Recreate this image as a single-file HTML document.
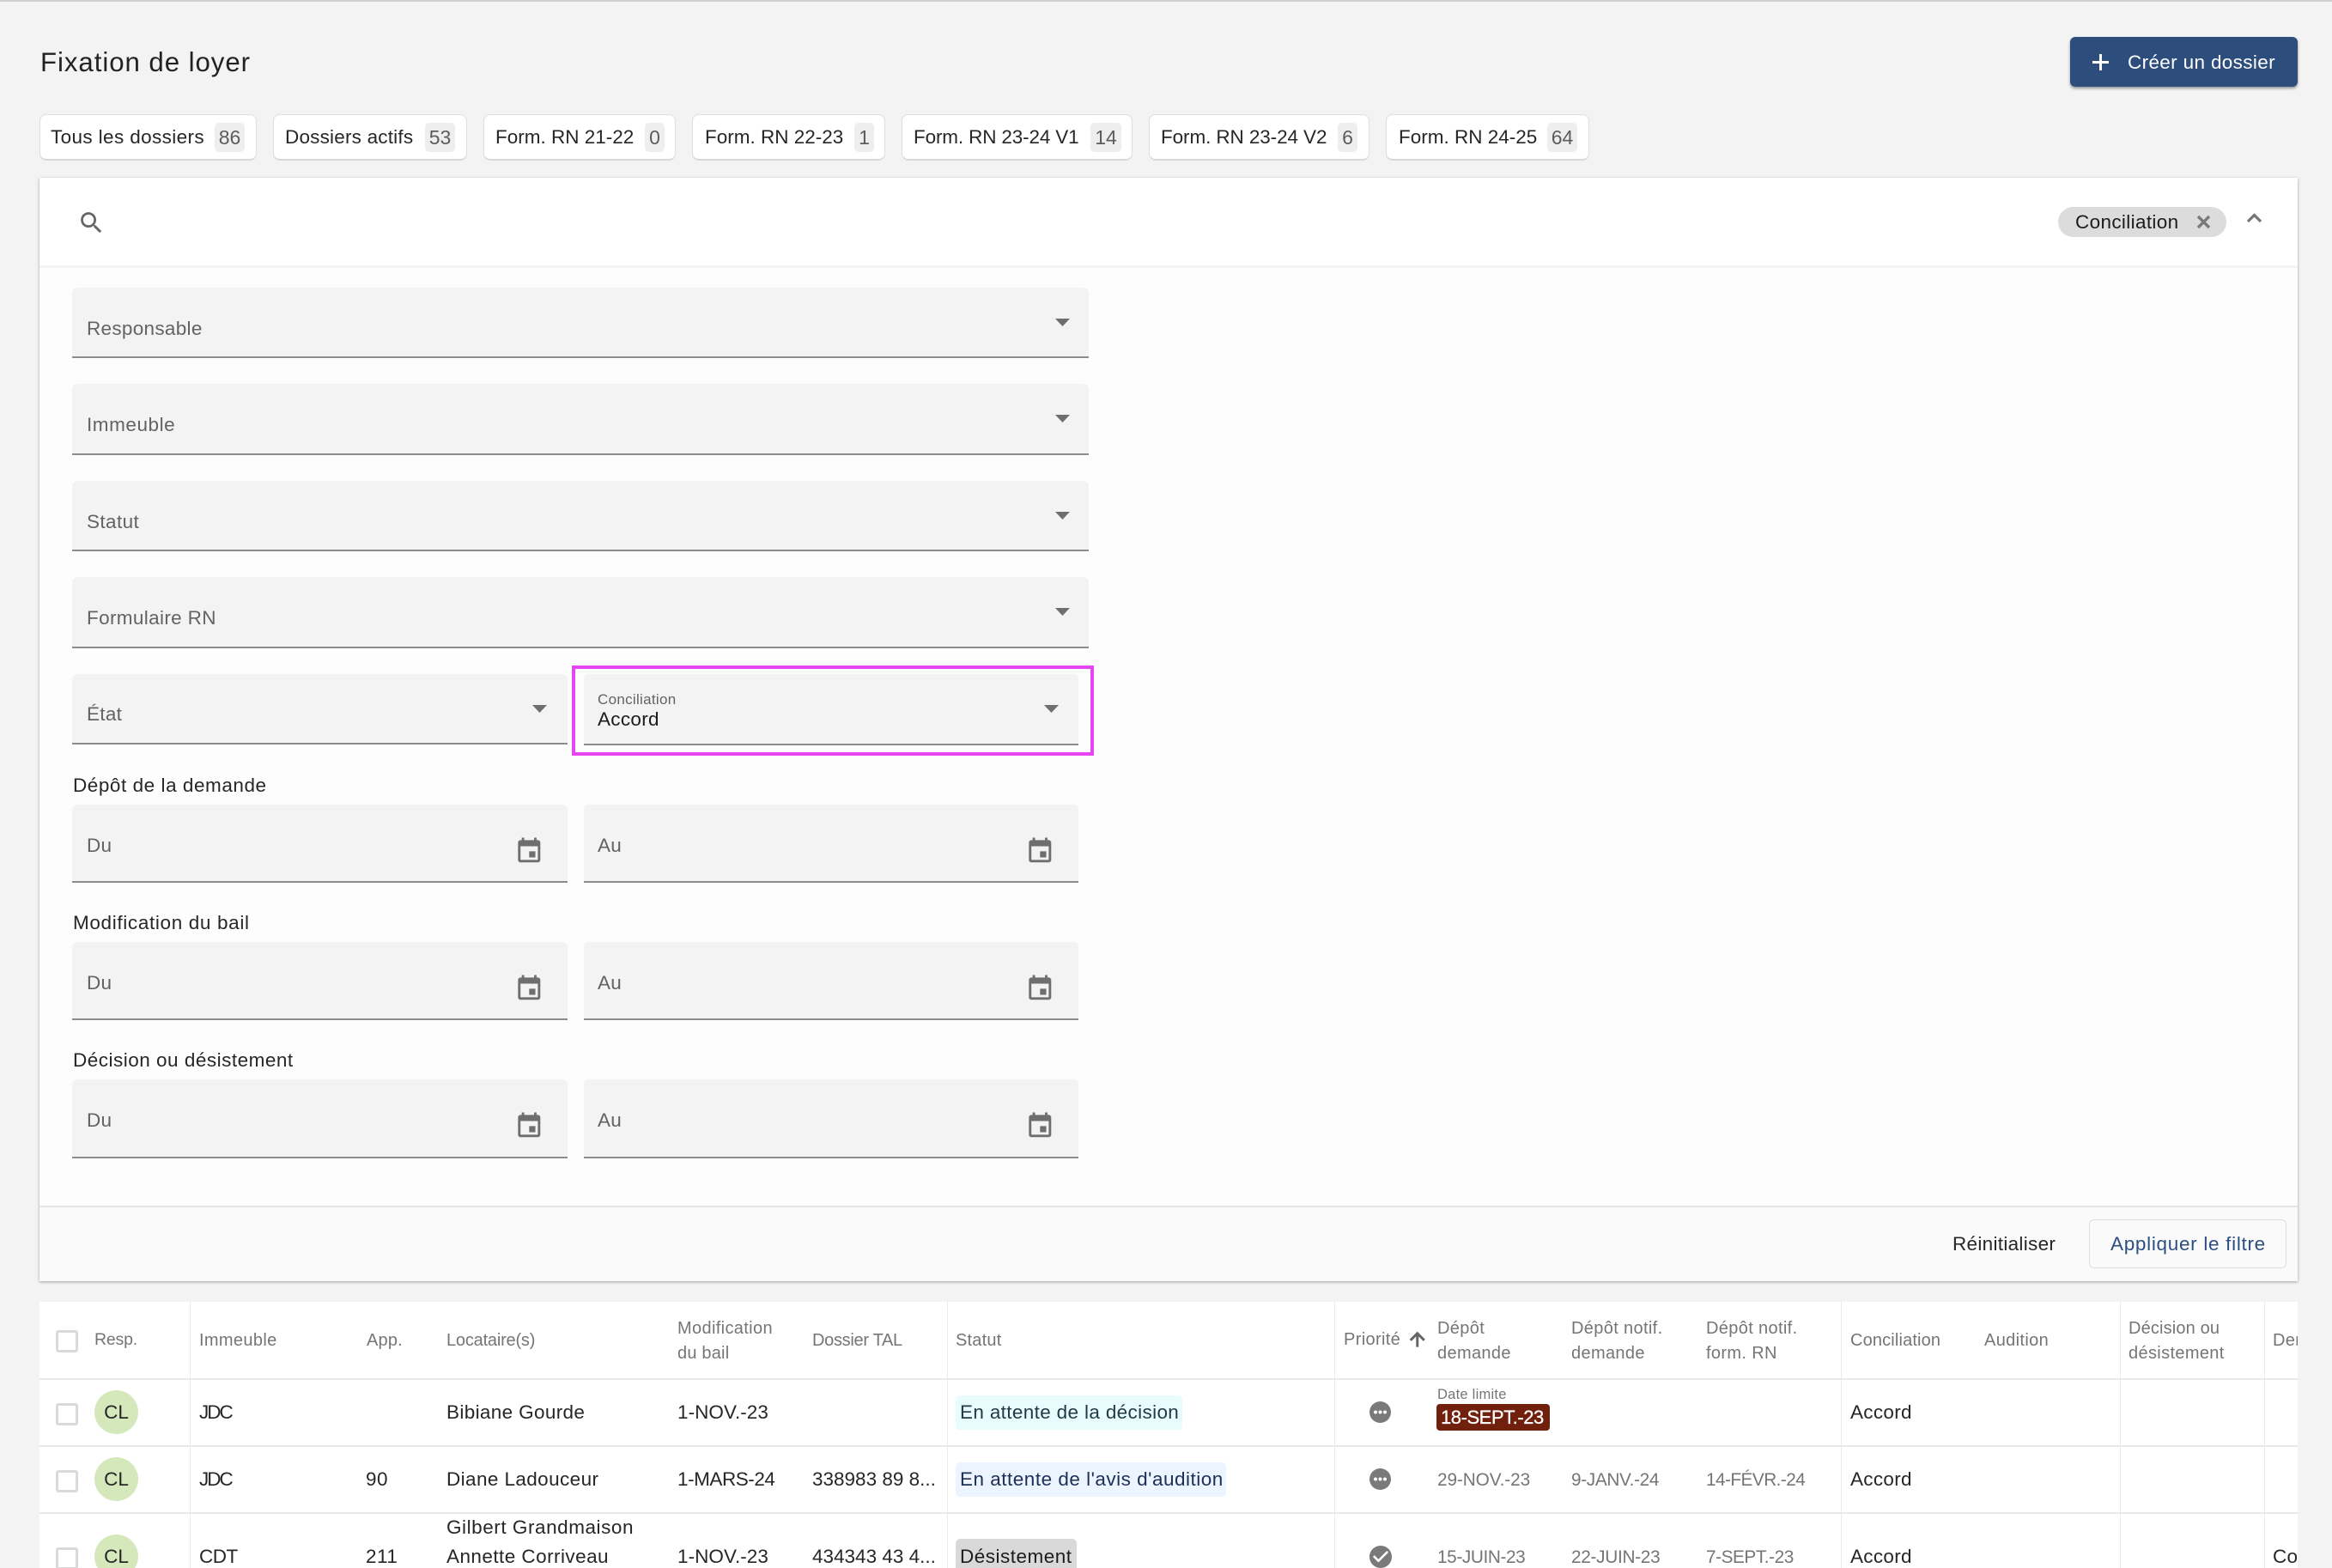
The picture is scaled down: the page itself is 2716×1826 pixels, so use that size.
<!DOCTYPE html>
<html lang="fr">
<head>
<meta charset="utf-8">
<title>Fixation de loyer</title>
<style>
html,body{margin:0;padding:0;width:2716px;height:1826px;overflow:hidden;background:#f3f3f3;}
body{font-family:"Liberation Sans",sans-serif;color:#262626;position:relative;}
.t,.b,svg.i{position:absolute;}
.t{white-space:nowrap;line-height:1;}
.s{font-size:22.5px;letter-spacing:.3px;}
.h{font-size:20px;letter-spacing:.35px;color:#757575;}
.g{color:#636363;}
.d{color:#757575;font-size:20.8px;}
.tab{position:absolute;top:133px;height:54px;box-sizing:border-box;background:#fff;border:1px solid #dedede;border-bottom:2px solid #d9d9d9;border-radius:8px;}
.bd{position:absolute;top:143px;height:34px;background:#eee;border-radius:5px;color:#5c5c5c;font-size:23px;line-height:35px;text-align:center;}
.f{position:absolute;background:#f3f3f3;border-radius:6px 6px 0 0;border-bottom:2px solid #8c8c8c;box-sizing:content-box;}
.ck{position:absolute;left:65px;width:26px;height:26px;box-sizing:border-box;border:3px solid #dadada;border-radius:3px;background:#fff;}
.av{position:absolute;left:110px;width:51px;height:51px;border-radius:50%;background:#d5e8bc;text-align:center;line-height:52px;font-size:22.5px;color:#262626;}
.vl{position:absolute;top:1516px;bottom:0;width:1px;background:#ebebeb;}
.hl{position:absolute;left:46px;right:0;height:2px;background:#e8e8e8;}
.chip{position:absolute;height:40px;border-radius:5px;}
svg.i{fill:#6e6e6e;display:block;}
</style>
</head>
<body>
<div class="b" style="left:0;top:0;width:2716px;height:2px;background:#cfcfcf;"></div>

<div class="t" style="left:47px;top:57px;font-size:31.2px;letter-spacing:.95px;color:#222;">Fixation de loyer</div>

<div class="b" style="left:2411px;top:43px;width:265px;height:58px;background:#2d4d7c;border-radius:6px;box-shadow:0 2px 3px rgba(0,0,0,.4);"></div>
<div class="b" style="left:2437px;top:71px;width:19px;height:3px;background:#fff;"></div>
<div class="b" style="left:2445px;top:63px;width:3px;height:19px;background:#fff;"></div>
<div class="t s" style="left:2478px;top:62px;color:#fff;letter-spacing:.35px;">Créer un dossier</div>

<div class="tab" style="left:46px;width:253px;"></div><div class="t s" style="left:59px;top:149px;letter-spacing:.38px;">Tous les dossiers</div><div class="bd" style="left:250px;width:35px;">86</div>
<div class="tab" style="left:318px;width:226px;"></div><div class="t s" style="left:332px;top:149px;letter-spacing:.2px;">Dossiers actifs</div><div class="bd" style="left:495px;width:35px;">53</div>
<div class="tab" style="left:563px;width:224px;"></div><div class="t s" style="left:577px;top:149px;letter-spacing:0;">Form. RN 21-22</div><div class="bd" style="left:751px;width:23px;">0</div>
<div class="tab" style="left:806px;width:225px;"></div><div class="t s" style="left:821px;top:149px;letter-spacing:0;">Form. RN 22-23</div><div class="bd" style="left:995px;width:23px;">1</div>
<div class="tab" style="left:1050px;width:269px;"></div><div class="t s" style="left:1064px;top:149px;letter-spacing:-.15px;">Form. RN 23-24 V1</div><div class="bd" style="left:1270px;width:36px;">14</div>
<div class="tab" style="left:1338px;width:257px;"></div><div class="t s" style="left:1352px;top:149px;letter-spacing:-.1px;">Form. RN 23-24 V2</div><div class="bd" style="left:1558px;width:23px;">6</div>
<div class="tab" style="left:1614px;width:237px;"></div><div class="t s" style="left:1629px;top:149px;letter-spacing:0;">Form. RN 24-25</div><div class="bd" style="left:1802px;width:35px;">64</div>

<!-- Filter card -->
<div class="b" style="left:46px;top:207px;width:2630px;height:1285px;background:#fdfdfd;box-shadow:0 1px 3px rgba(0,0,0,.35);"></div>
<div class="b" style="left:46px;top:207px;width:2630px;height:102px;background:#fff;"></div>
<div class="b" style="left:46px;top:309px;width:2630px;height:3px;background:#f3f3f3;"></div>

<svg class="i" style="left:90px;top:243px;fill:#666;" width="33" height="33" viewBox="0 0 24 24"><path d="M15.5 14h-.79l-.28-.27C15.41 12.59 16 11.11 16 9.5 16 5.91 13.09 3 9.5 3S3 5.91 3 9.5 5.91 16 9.5 16c1.61 0 3.09-.59 4.23-1.57l.27.28v.79l5 4.99L20.49 19l-4.99-5zm-6 0C7.01 14 5 11.99 5 9.5S7.01 5 9.5 5 14 7.01 14 9.5 11.99 14 9.5 14z"/></svg>

<div class="b" style="left:2397px;top:241px;width:196px;height:35px;border-radius:18px;background:#dcdcdc;"></div>
<div class="t s" style="left:2417px;top:248px;color:#1c1c1c;letter-spacing:.35px;">Conciliation</div>
<svg class="i" style="left:2557px;top:249px;fill:none;" width="19" height="19" viewBox="0 0 19 19"><path d="M3 3L16 16M16 3L3 16" stroke="#7a7a7a" stroke-width="3.4"/></svg>
<svg class="i" style="left:2615px;top:246px;fill:none;" width="21" height="15" viewBox="0 0 21 15"><path d="M3 12L10.5 4.5L18 12" stroke="#757575" stroke-width="3.2"/></svg>

<!-- Selects -->
<div class="f" style="left:84px;top:335px;width:1184px;height:80px;"></div>
<div class="t s g" style="left:101px;top:372px;">Responsable</div>
<svg class="i" style="left:1229px;top:371px;" width="17" height="9" viewBox="0 0 17 9"><path d="M0 0H17L8.5 9Z"/></svg>

<div class="f" style="left:84px;top:447px;width:1184px;height:81px;"></div>
<div class="t s g" style="left:101px;top:484px;letter-spacing:.55px;">Immeuble</div>
<svg class="i" style="left:1229px;top:483px;" width="17" height="9" viewBox="0 0 17 9"><path d="M0 0H17L8.5 9Z"/></svg>

<div class="f" style="left:84px;top:560px;width:1184px;height:80px;"></div>
<div class="t s g" style="left:101px;top:597px;letter-spacing:.4px;">Statut</div>
<svg class="i" style="left:1229px;top:596px;" width="17" height="9" viewBox="0 0 17 9"><path d="M0 0H17L8.5 9Z"/></svg>

<div class="f" style="left:84px;top:672px;width:1184px;height:81px;"></div>
<div class="t s g" style="left:101px;top:709px;letter-spacing:.35px;">Formulaire RN</div>
<svg class="i" style="left:1229px;top:708px;" width="17" height="9" viewBox="0 0 17 9"><path d="M0 0H17L8.5 9Z"/></svg>

<div class="f" style="left:84px;top:785px;width:577px;height:80px;"></div>
<div class="t s g" style="left:101px;top:821px;">État</div>
<svg class="i" style="left:620px;top:821px;" width="17" height="9" viewBox="0 0 17 9"><path d="M0 0H17L8.5 9Z"/></svg>

<div class="b" style="left:666px;top:775px;width:608px;height:105px;box-sizing:border-box;border:4px solid #e845f2;"></div>
<div class="f" style="left:680px;top:785px;width:576px;height:81px;"></div>
<div class="t g" style="left:696px;top:806px;font-size:17px;letter-spacing:.3px;">Conciliation</div>
<div class="t s" style="left:696px;top:827px;color:#1c1c1c;">Accord</div>
<svg class="i" style="left:1216px;top:821px;" width="17" height="9" viewBox="0 0 17 9"><path d="M0 0H17L8.5 9Z"/></svg>

<!-- Date groups -->
<div class="t s" style="left:85px;top:904px;letter-spacing:.55px;">Dépôt de la demande</div>
<div class="f" style="left:84px;top:937px;width:577px;height:89px;"></div><div class="t s g" style="left:101px;top:974px;">Du</div>
<svg class="i" style="left:598.7px;top:973.5px;" width="34.64" height="34.64" viewBox="0 0 24 24"><path d="M17 12h-5v5h5v-5zM16 1v2H8V1H6v2H5c-1.11 0-1.99.9-1.99 2L3 19c0 1.1.89 2 2 2h14c1.1 0 2-.9 2-2V5c0-1.100-.9-2-2-2h-1V1h-2zm3 18H5V8h14v11z"/></svg>
<div class="f" style="left:680px;top:937px;width:576px;height:89px;"></div><div class="t s g" style="left:696px;top:974px;">Au</div>
<svg class="i" style="left:1193.5px;top:973.5px;" width="34.64" height="34.64" viewBox="0 0 24 24"><path d="M17 12h-5v5h5v-5zM16 1v2H8V1H6v2H5c-1.11 0-1.99.9-1.99 2L3 19c0 1.1.89 2 2 2h14c1.1 0 2-.9 2-2V5c0-1.100-.9-2-2-2h-1V1h-2zm3 18H5V8h14v11z"/></svg>

<div class="t s" style="left:85px;top:1064px;letter-spacing:.65px;">Modification du bail</div>
<div class="f" style="left:84px;top:1097px;width:577px;height:89px;"></div><div class="t s g" style="left:101px;top:1134px;">Du</div>
<svg class="i" style="left:598.7px;top:1133.5px;" width="34.64" height="34.64" viewBox="0 0 24 24"><path d="M17 12h-5v5h5v-5zM16 1v2H8V1H6v2H5c-1.11 0-1.99.9-1.99 2L3 19c0 1.1.89 2 2 2h14c1.1 0 2-.9 2-2V5c0-1.100-.9-2-2-2h-1V1h-2zm3 18H5V8h14v11z"/></svg>
<div class="f" style="left:680px;top:1097px;width:576px;height:89px;"></div><div class="t s g" style="left:696px;top:1134px;">Au</div>
<svg class="i" style="left:1193.5px;top:1133.5px;" width="34.64" height="34.64" viewBox="0 0 24 24"><path d="M17 12h-5v5h5v-5zM16 1v2H8V1H6v2H5c-1.11 0-1.99.9-1.99 2L3 19c0 1.1.89 2 2 2h14c1.1 0 2-.9 2-2V5c0-1.100-.9-2-2-2h-1V1h-2zm3 18H5V8h14v11z"/></svg>

<div class="t s" style="left:85px;top:1224px;letter-spacing:.5px;">Décision ou désistement</div>
<div class="f" style="left:84px;top:1257px;width:577px;height:90px;"></div><div class="t s g" style="left:101px;top:1294px;">Du</div>
<svg class="i" style="left:598.7px;top:1293.5px;" width="34.64" height="34.64" viewBox="0 0 24 24"><path d="M17 12h-5v5h5v-5zM16 1v2H8V1H6v2H5c-1.11 0-1.99.9-1.99 2L3 19c0 1.1.89 2 2 2h14c1.1 0 2-.9 2-2V5c0-1.100-.9-2-2-2h-1V1h-2zm3 18H5V8h14v11z"/></svg>
<div class="f" style="left:680px;top:1257px;width:576px;height:90px;"></div><div class="t s g" style="left:696px;top:1294px;">Au</div>
<svg class="i" style="left:1193.5px;top:1293.5px;" width="34.64" height="34.64" viewBox="0 0 24 24"><path d="M17 12h-5v5h5v-5zM16 1v2H8V1H6v2H5c-1.11 0-1.99.9-1.99 2L3 19c0 1.1.89 2 2 2h14c1.1 0 2-.9 2-2V5c0-1.100-.9-2-2-2h-1V1h-2zm3 18H5V8h14v11z"/></svg>

<!-- Footer -->
<div class="b" style="left:46px;top:1404px;width:2630px;height:88px;background:#fafafa;border-top:2px solid #e6e6e6;box-sizing:border-box;"></div>
<div class="t s" style="left:2274px;top:1438px;">Réinitialiser</div>
<div class="b" style="left:2433px;top:1420px;width:230px;height:57px;box-sizing:border-box;border:1px solid #dedede;border-radius:6px;"></div>
<div class="t s" style="left:2458px;top:1438px;color:#2c4f82;letter-spacing:.7px;">Appliquer le filtre</div>

<!-- Table -->
<div class="b" style="left:0;top:0;width:2676px;height:1826px;overflow:hidden;">
<div class="b" style="left:46px;top:1516px;width:2630px;height:310px;background:#fff;"></div>
<div class="vl" style="left:221px;"></div>
<div class="vl" style="left:1103px;"></div>
<div class="vl" style="left:1554px;"></div>
<div class="vl" style="left:2144px;"></div>
<div class="vl" style="left:2469px;"></div>
<div class="vl" style="left:2637px;"></div>
<div class="hl" style="top:1605px;"></div>
<div class="hl" style="top:1683px;"></div>
<div class="hl" style="top:1761px;"></div>

<div class="ck" style="top:1549px;"></div>
<div class="t h" style="left:110px;top:1551px;letter-spacing:-.2px;font-size:19.5px;">Resp.</div>
<div class="t h" style="left:232px;top:1551px;">Immeuble</div>
<div class="t h" style="left:427px;top:1551px;letter-spacing:.2px;">App.</div>
<div class="t h" style="left:520px;top:1551px;letter-spacing:-.2px;">Locataire(s)</div>
<div class="t h" style="left:789px;top:1537px;">Modification</div>
<div class="t h" style="left:789px;top:1566px;letter-spacing:.2px;">du bail</div>
<div class="t h" style="left:946px;top:1551px;letter-spacing:-.3px;">Dossier TAL</div>
<div class="t h" style="left:1113px;top:1551px;letter-spacing:.2px;">Statut</div>
<div class="t h" style="left:1565px;top:1550px;">Priorité</div>
<svg class="i" style="left:1638px;top:1547px;fill:#666;stroke:#666;stroke-width:.8;" width="25.5" height="25.5" viewBox="0 0 24 24"><path d="M4 12l1.41 1.41L11 7.83V20h2V7.83l5.58 5.59L20 12l-8-8-8 8z"/></svg>
<div class="t h" style="left:1674px;top:1537px;">Dépôt</div>
<div class="t h" style="left:1674px;top:1566px;">demande</div>
<div class="t h" style="left:1830px;top:1537px;">Dépôt notif.</div>
<div class="t h" style="left:1830px;top:1566px;">demande</div>
<div class="t h" style="left:1987px;top:1537px;">Dépôt notif.</div>
<div class="t h" style="left:1987px;top:1566px;">form. RN</div>
<div class="t h" style="left:2155px;top:1551px;letter-spacing:.15px;">Conciliation</div>
<div class="t h" style="left:2311px;top:1551px;">Audition</div>
<div class="t h" style="left:2479px;top:1537px;letter-spacing:.15px;">Décision ou</div>
<div class="t h" style="left:2479px;top:1566px;">désistement</div>
<div class="t h" style="left:2647px;top:1551px;">Dernier</div>

<!-- Row 1 -->
<div class="ck" style="top:1634px;"></div>
<div class="av" style="top:1619px;">CL</div>
<div class="t s" style="left:232px;top:1634px;letter-spacing:-2px;">JDC</div>
<div class="t s" style="left:520px;top:1634px;letter-spacing:.35px;">Bibiane Gourde</div>
<div class="t s" style="left:789px;top:1634px;letter-spacing:.05px;">1-NOV.-23</div>
<div class="chip" style="left:1113px;top:1625px;width:264px;background:#e8fcfe;"></div>
<div class="t s" style="left:1118px;top:1634px;color:#1f3a44;letter-spacing:.35px;">En attente de la décision</div>
<svg class="i" style="left:1595px;top:1632px;" width="25" height="25" viewBox="0 0 25 25"><circle cx="12.5" cy="12.5" r="12.5" fill="#7a7a7a"/><circle cx="7" cy="12.5" r="2" fill="#fff"/><circle cx="12.5" cy="12.5" r="2" fill="#fff"/><circle cx="18" cy="12.5" r="2" fill="#fff"/></svg>
<div class="t" style="left:1674px;top:1616px;font-size:16.5px;letter-spacing:.25px;color:#757575;">Date limite</div>
<div class="b" style="left:1673px;top:1635px;width:132px;height:31px;background:#72200e;border-radius:4px;"></div>
<div class="t" style="left:1678px;top:1640px;color:#fff;font-size:22px;letter-spacing:-.45px;-webkit-text-stroke:.3px #fff;">18-SEPT.-23</div>
<div class="t s" style="left:2155px;top:1634px;">Accord</div>

<!-- Row 2 -->
<div class="ck" style="top:1712px;"></div>
<div class="av" style="top:1697px;">CL</div>
<div class="t s" style="left:232px;top:1712px;letter-spacing:-2px;">JDC</div>
<div class="t s" style="left:426px;top:1712px;letter-spacing:.5px;">90</div>
<div class="t s" style="left:520px;top:1712px;letter-spacing:.4px;">Diane Ladouceur</div>
<div class="t s" style="left:789px;top:1712px;letter-spacing:-.45px;">1-MARS-24</div>
<div class="t s" style="left:946px;top:1712px;letter-spacing:0;">338983 89 8...</div>
<div class="chip" style="left:1113px;top:1703px;width:315px;background:#ecf4ff;"></div>
<div class="t s" style="left:1118px;top:1712px;color:#1c2f55;letter-spacing:.5px;">En attente de l'avis d'audition</div>
<svg class="i" style="left:1595px;top:1710px;" width="25" height="25" viewBox="0 0 25 25"><circle cx="12.5" cy="12.5" r="12.5" fill="#7a7a7a"/><circle cx="7" cy="12.5" r="2" fill="#fff"/><circle cx="12.5" cy="12.5" r="2" fill="#fff"/><circle cx="18" cy="12.5" r="2" fill="#fff"/></svg>
<div class="t d" style="left:1674px;top:1714px;letter-spacing:-.1px;">29-NOV.-23</div>
<div class="t d" style="left:1830px;top:1714px;letter-spacing:-.35px;">9-JANV.-24</div>
<div class="t d" style="left:1987px;top:1714px;letter-spacing:-.55px;">14-FÉVR.-24</div>
<div class="t s" style="left:2155px;top:1712px;">Accord</div>

<!-- Row 3 -->
<div class="ck" style="top:1802px;"></div>
<div class="av" style="top:1787px;">CL</div>
<div class="t s" style="left:232px;top:1802px;letter-spacing:-.5px;">CDT</div>
<div class="t s" style="left:426px;top:1802px;letter-spacing:.5px;">211</div>
<div class="t s" style="left:520px;top:1768px;letter-spacing:.55px;">Gilbert Grandmaison</div>
<div class="t s" style="left:520px;top:1802px;letter-spacing:.45px;">Annette Corriveau</div>
<div class="t s" style="left:789px;top:1802px;letter-spacing:.05px;">1-NOV.-23</div>
<div class="t s" style="left:946px;top:1802px;letter-spacing:0;">434343 43 4...</div>
<div class="chip" style="left:1113px;top:1792px;width:141px;background:#d9d9d9;"></div>
<div class="t s" style="left:1118px;top:1802px;color:#1c1c1c;letter-spacing:.5px;">Désistement</div>
<svg class="i" style="left:1595px;top:1800px;fill:#7a7a7a;" width="26" height="26" viewBox="2 2 20 20"><path d="M12 2C6.48 2 2 6.48 2 12s4.48 10 10 10 10-4.48 10-10S17.52 2 12 2zm-2 15l-5-5 1.41-1.41L10 14.17l7.59-7.59L19 8l-9 9z"/></svg>
<div class="t d" style="left:1674px;top:1804px;letter-spacing:-.4px;">15-JUIN-23</div>
<div class="t d" style="left:1830px;top:1804px;letter-spacing:-.3px;">22-JUIN-23</div>
<div class="t d" style="left:1987px;top:1804px;letter-spacing:-.45px;">7-SEPT.-23</div>
<div class="t s" style="left:2155px;top:1802px;">Accord</div>
<div class="t s" style="left:2647px;top:1802px;">Conciliation</div>
</div>
</body>
</html>
